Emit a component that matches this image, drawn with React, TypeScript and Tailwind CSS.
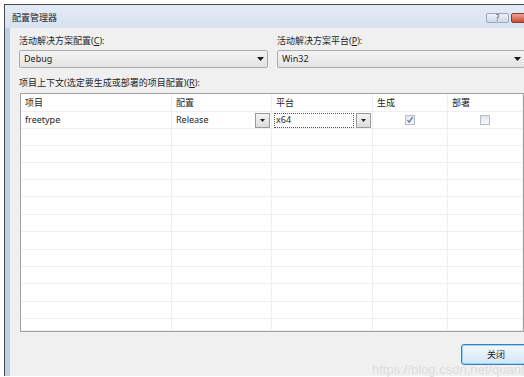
import React from 'react'

const font = { fontFamily: '"Noto Sans", "Noto Sans CJK SC", sans-serif' }

const rowHeights = ['h-[17px]', 'h-[17px]', 'h-[17px]', 'h-[17px]', 'h-[18px]', 'h-[17px]', 'h-[18px]', 'h-[17px]', 'h-[17px]', 'h-[18px]', 'h-[17px]', 'h-[12px]']

function Arrow() {
  return (
    <svg width="7" height="4" viewBox="0 0 7 4">
      <path d="M0 0h7L3.5 4z" fill="#1a1a1a" />
    </svg>
  )
}

function Combo({ text, className }: { text: string; className: string }) {
  return (
    <div
      className={`flex h-[18px] items-center justify-between rounded-[2px] border border-[#acacac] bg-gradient-to-b from-[#f3f3f3] to-[#e3e3e3] pl-[4px] pr-[3px] text-[9px] text-[#1e1e1e] ${className}`}
    >
      <span>{text}</span>
      <Arrow />
    </div>
  )
}

function CellDrop() {
  return (
    <div className="flex h-[15px] w-[15px] items-center justify-center border border-[#9a9a9a] bg-gradient-to-b from-[#f4f4f4] to-[#dcdcdc]">
      <svg width="5" height="3" viewBox="0 0 5 3">
        <path d="M0 0h5L2.5 3z" fill="#222" />
      </svg>
    </div>
  )
}

function Check({ checked }: { checked?: boolean }) {
  return (
    <div className="flex h-[10px] w-[10px] items-center justify-center border border-[#b4bcc6] bg-gradient-to-b from-[#e4e8ee] to-[#f6f7f9]">
      {checked && (
        <svg width="8" height="8" viewBox="0 0 8 8">
          <path d="M1.5 4.2 3.2 6.2 6.6 1.2" stroke="#5676b8" strokeWidth="1.3" fill="none" />
        </svg>
      )}
    </div>
  )
}

export default function App() {
  return (
    <div className="relative h-[377px] w-[524px] overflow-hidden bg-white pl-[4px] pt-[4px]" style={font}>
      <div className="flex w-[560px] flex-col border-l border-t border-[#4a4a4a] bg-[#bad1ea]">
        {/* title bar */}
        <div className="flex h-[23px] items-start bg-gradient-to-b from-[#e3ebf5] to-[#d7e3f1] pl-[7px]">
          <span className="mt-[8px] text-[9px] leading-none text-[#1e1e1e]">配置管理器</span>
          <div className="ml-auto mr-[13px] mt-[8px] flex gap-[2px]">
            <div className="flex h-[10px] w-[23px] items-center justify-center rounded-[2px] border border-[#9aa8bb] bg-gradient-to-b from-[#eef3f9] to-[#cfdae8] text-[8px] leading-none text-[#445]">
              ?
            </div>
            <div className="flex h-[10px] w-[40px] items-center justify-center rounded-[2px] border border-[#8b3a2e] bg-gradient-to-b from-[#e9a493] to-[#c94a32] text-[8px] leading-none text-white">
              ✕
            </div>
          </div>
        </div>
        <div className="flex">
          <div className="w-[5px]" />
          {/* content */}
          <div className="flex h-[348px] flex-1 flex-col bg-[#f0f0f0] pl-[9px] pt-[8px] text-[9px] text-[#1e1e1e]">
            <div className="flex gap-[9px]">
              <div className="flex w-[249px] flex-col">
                <span className="h-[14px] leading-[10px]">
                  活动解决方案配置(<u>C</u>):
                </span>
                <Combo text="Debug" className="w-[249px]" />
              </div>
              <div className="flex flex-col">
                <span className="h-[14px] leading-[10px]">
                  活动解决方案平台(<u>P</u>):
                </span>
                <Combo text="Win32" className="w-[248px]" />
              </div>
            </div>
            <span className="mt-[10px] h-[15px] leading-[10px]">
              项目上下文(选定要生成或部署的项目配置)(<u>R</u>):
            </span>
            {/* grid */}
            <div className="ml-[1px] flex h-[239px] w-[504px] flex-col overflow-hidden border border-[#a0a0a0] bg-white">
              <div className="grid h-[18px] grid-cols-[151px_100px_101px_75px_1fr] border-b border-[#eceff3]">
                {['项目', '配置', '平台', '生成', '部署'].map((h) => (
                  <div key={h} className="flex items-center border-r border-[#eceff3] pl-[4px]">
                    {h}
                  </div>
                ))}
              </div>
              <div className="grid h-[17px] grid-cols-[151px_100px_101px_75px_1fr] border-b border-[#eceff3]">
                <div className="flex items-center border-r border-[#eceff3] pl-[4px]">freetype</div>
                <div className="flex items-center justify-between border-r border-[#eceff3] pl-[4px] pr-[1px]">
                  <span>Release</span>
                  <CellDrop />
                </div>
                <div className="flex items-center gap-[2px] border-r border-[#eceff3] pl-[2px] pr-[1px]">
                  <div className="flex h-[15px] flex-1 items-center border border-dotted border-[#555] pl-[1px]">x64</div>
                  <CellDrop />
                </div>
                <div className="flex items-center justify-center border-r border-[#eceff3]">
                  <Check checked />
                </div>
                <div className="flex items-center justify-center border-r border-[#eceff3]">
                  <Check />
                </div>
              </div>
              {rowHeights.map((h, i) => (
                <div key={i} className={`grid ${h} shrink-0 grid-cols-[151px_100px_101px_75px_1fr] border-b border-[#eceff3]`}>
                  <div className="border-r border-[#eceff3]" />
                  <div className="border-r border-[#eceff3]" />
                  <div className="border-r border-[#eceff3]" />
                  <div className="border-r border-[#eceff3]" />
                  <div className="border-r border-[#eceff3]" />
                </div>
              ))}
            </div>
            <div className="mt-[12px] flex pl-[442px]">
              <div className="flex h-[21px] w-[70px] items-center justify-center rounded-[3px] border border-[#3c7fb1] bg-gradient-to-b from-[#f2f8fc] to-[#d3e7f6] shadow-[inset_0_0_0_1px_#98d4f3]">
                关闭
              </div>
            </div>
          </div>
        </div>
      </div>
      <div className="absolute bottom-[-2px] left-[372px] whitespace-nowrap font-['Liberation_Sans'] text-[13px] text-[#dcdcdc]">
        https://blog.csdn.net/quanlun
      </div>
    </div>
  )
}
